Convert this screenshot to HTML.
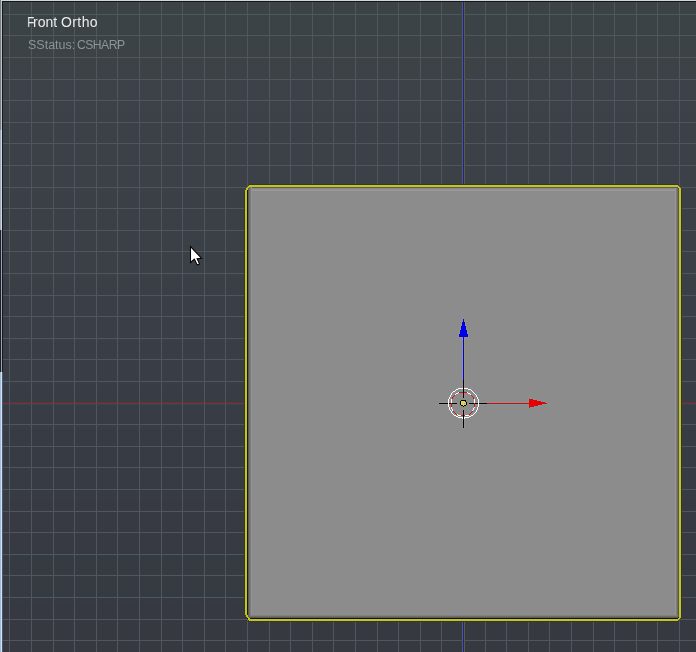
<!DOCTYPE html>
<html><head><meta charset="utf-8"><style>
html,body{margin:0;padding:0;width:696px;height:652px;overflow:hidden;background:#3a3e46}
.t{position:absolute;font-family:"Liberation Sans",sans-serif;white-space:nowrap;line-height:1;will-change:transform}
#t1{left:27px;top:15px;font-size:14px;color:#ececec;transform:scaleX(0.85);transform-origin:0 0}
#t1r{left:33px;top:15px;font-size:14px;color:#ececec;letter-spacing:0px}
#t1b{left:61px;top:15px;font-size:14px;color:#ececec;letter-spacing:0.4px}
#t2{left:28px;top:39px;font-size:12.5px;color:#8e9396;letter-spacing:0px}
#t2b{left:77px;top:39px;font-size:12.2px;color:#8e9396;letter-spacing:-0.55px}
</style></head><body>
<svg width="696" height="652" viewBox="0 0 696 652" shape-rendering="crispEdges" style="position:absolute;left:0;top:0"><rect x="0" y="0" width="696" height="38" fill="#3c4346"/><rect x="0" y="38" width="696" height="38" fill="#3c4246"/><rect x="0" y="76" width="696" height="37" fill="#3c4247"/><rect x="0" y="113" width="696" height="66" fill="#3c4147"/><rect x="0" y="179" width="696" height="14" fill="#3c4047"/><rect x="0" y="193" width="696" height="42" fill="#3b4047"/><rect x="0" y="235" width="696" height="1" fill="#3b4046"/><rect x="0" y="236" width="696" height="42" fill="#3b3f46"/><rect x="0" y="278" width="696" height="14" fill="#3a3f46"/><rect x="0" y="292" width="696" height="50" fill="#3a3e46"/><rect x="0" y="342" width="696" height="43" fill="#393d45"/><rect x="0" y="385" width="696" height="44" fill="#383c44"/><rect x="0" y="429" width="696" height="55" fill="#373b43"/><rect x="0" y="484" width="696" height="17" fill="#373b42"/><rect x="0" y="501" width="696" height="50" fill="#373a42"/><rect x="0" y="551" width="696" height="1" fill="#363a42"/><rect x="0" y="552" width="696" height="50" fill="#363a41"/><rect x="0" y="602" width="696" height="17" fill="#363941"/><rect x="0" y="619" width="696" height="33" fill="#363940"/><rect x="3" y="402" width="693" height="1" fill="#34444a"/><rect x="3" y="404" width="693" height="1" fill="#34444a"/><rect x="462" y="2" width="1" height="650" fill="#545c54"/><rect x="464" y="2" width="1" height="650" fill="#545c54"/><g fill="#50565e"><rect x="9" y="2" width="1" height="650"/><rect x="31" y="2" width="1" height="650"/><rect x="53" y="2" width="1" height="650"/><rect x="74" y="2" width="1" height="650"/><rect x="3" y="14" width="693" height="1"/><rect x="96" y="2" width="1" height="650"/><rect x="3" y="35" width="693" height="1"/><rect x="117" y="2" width="1" height="650"/><rect x="3" y="57" width="693" height="1"/><rect x="139" y="2" width="1" height="650"/><rect x="3" y="79" width="693" height="1"/><rect x="161" y="2" width="1" height="650"/><rect x="3" y="100" width="693" height="1"/><rect x="182" y="2" width="1" height="650"/><rect x="3" y="122" width="693" height="1"/><rect x="204" y="2" width="1" height="650"/><rect x="3" y="143" width="693" height="1"/><rect x="225" y="2" width="1" height="650"/><rect x="3" y="165" width="693" height="1"/><rect x="247" y="2" width="1" height="650"/><rect x="3" y="187" width="693" height="1"/><rect x="269" y="2" width="1" height="650"/><rect x="3" y="208" width="693" height="1"/><rect x="290" y="2" width="1" height="650"/><rect x="3" y="230" width="693" height="1"/><rect x="312" y="2" width="1" height="650"/><rect x="3" y="251" width="693" height="1"/><rect x="333" y="2" width="1" height="650"/><rect x="3" y="273" width="693" height="1"/><rect x="355" y="2" width="1" height="650"/><rect x="3" y="295" width="693" height="1"/><rect x="377" y="2" width="1" height="650"/><rect x="3" y="316" width="693" height="1"/><rect x="398" y="2" width="1" height="650"/><rect x="3" y="338" width="693" height="1"/><rect x="420" y="2" width="1" height="650"/><rect x="3" y="359" width="693" height="1"/><rect x="441" y="2" width="1" height="650"/><rect x="3" y="381" width="693" height="1"/><rect x="485" y="2" width="1" height="650"/><rect x="3" y="424" width="693" height="1"/><rect x="506" y="2" width="1" height="650"/><rect x="3" y="446" width="693" height="1"/><rect x="528" y="2" width="1" height="650"/><rect x="3" y="467" width="693" height="1"/><rect x="549" y="2" width="1" height="650"/><rect x="3" y="489" width="693" height="1"/><rect x="571" y="2" width="1" height="650"/><rect x="3" y="511" width="693" height="1"/><rect x="593" y="2" width="1" height="650"/><rect x="3" y="532" width="693" height="1"/><rect x="614" y="2" width="1" height="650"/><rect x="3" y="554" width="693" height="1"/><rect x="636" y="2" width="1" height="650"/><rect x="3" y="575" width="693" height="1"/><rect x="657" y="2" width="1" height="650"/><rect x="3" y="597" width="693" height="1"/><rect x="679" y="2" width="1" height="650"/><rect x="3" y="619" width="693" height="1"/><rect x="3" y="640" width="693" height="1"/></g><rect x="3" y="403" width="693" height="1" fill="#92282d"/><rect x="463" y="2" width="1" height="650" fill="#1f219c"/><rect x="247" y="187" width="432" height="432" fill="#8c8c8c"/><rect x="247" y="187" width="432" height="1" fill="#5a5a68"/><rect x="247" y="188" width="432" height="1" fill="#8a8a8a"/><rect x="247" y="189" width="432" height="1" fill="#939393"/><rect x="247" y="190" width="432" height="1" fill="#9a9a9a"/><rect x="247" y="187" width="1" height="432" fill="#16161e"/><rect x="248" y="187" width="1" height="432" fill="#5a5a5a"/><rect x="249" y="187" width="1" height="432" fill="#6e6e6e"/><rect x="250" y="187" width="1" height="432" fill="#7e7e7e"/><rect x="251" y="187" width="1" height="432" fill="#929292"/><rect x="675" y="188" width="1" height="431" fill="#969696"/><rect x="676" y="188" width="1" height="431" fill="#7e7e7e"/><rect x="677" y="188" width="1" height="431" fill="#6a6a6a"/><rect x="678" y="188" width="1" height="431" fill="#545462"/><rect x="251" y="615" width="427" height="1" fill="#808080"/><rect x="250" y="616" width="428" height="1" fill="#6e6e6e"/><rect x="249" y="617" width="429" height="1" fill="#5a5a5a"/><rect x="248" y="618" width="430" height="1" fill="#101018"/><rect x="678" y="617" width="1" height="2" fill="#202028"/><rect x="249" y="184" width="429" height="1" fill="#30364a"/><rect x="249" y="621" width="429" height="1" fill="#30364a"/><rect x="244" y="191" width="1" height="423" fill="#30364a"/><rect x="681" y="189" width="1" height="428" fill="#30364a"/><g fill="#c9c508"><rect x="249" y="185" width="429" height="2"/><rect x="249" y="619" width="429" height="2"/><rect x="245" y="190" width="2" height="425"/><rect x="679" y="188" width="2" height="430"/><rect x="248" y="186" width="2" height="1"/><rect x="247" y="187" width="2" height="1"/><rect x="246" y="188" width="2" height="1"/><rect x="246" y="189" width="2" height="1"/><rect x="246" y="615" width="2" height="1"/><rect x="246" y="616" width="2" height="1"/><rect x="247" y="617" width="2" height="1"/><rect x="248" y="618" width="2" height="1"/><rect x="248" y="619" width="2" height="1"/><rect x="677" y="186" width="2" height="1"/><rect x="678" y="187" width="2" height="1"/><rect x="678" y="618" width="2" height="1"/><rect x="677" y="619" width="2" height="1"/></g><g fill="#949482"><rect x="463" y="318" width="1" height="1"/><rect x="462" y="319" width="1" height="1"/><rect x="464" y="319" width="1" height="1"/><rect x="462" y="320" width="1" height="1"/><rect x="464" y="320" width="1" height="1"/><rect x="462" y="321" width="1" height="1"/><rect x="464" y="321" width="1" height="1"/><rect x="461" y="322" width="1" height="1"/><rect x="465" y="322" width="1" height="1"/><rect x="461" y="323" width="1" height="1"/><rect x="465" y="323" width="1" height="1"/><rect x="461" y="324" width="1" height="1"/><rect x="465" y="324" width="1" height="1"/><rect x="461" y="325" width="1" height="1"/><rect x="465" y="325" width="1" height="1"/><rect x="460" y="326" width="1" height="1"/><rect x="466" y="326" width="1" height="1"/><rect x="460" y="327" width="1" height="1"/><rect x="466" y="327" width="1" height="1"/><rect x="460" y="328" width="1" height="1"/><rect x="466" y="328" width="1" height="1"/><rect x="460" y="329" width="1" height="1"/><rect x="466" y="329" width="1" height="1"/><rect x="459" y="330" width="1" height="1"/><rect x="467" y="330" width="1" height="1"/><rect x="459" y="331" width="1" height="1"/><rect x="467" y="331" width="1" height="1"/><rect x="459" y="332" width="1" height="1"/><rect x="467" y="332" width="1" height="1"/><rect x="459" y="333" width="1" height="1"/><rect x="467" y="333" width="1" height="1"/><rect x="458" y="334" width="1" height="1"/><rect x="468" y="334" width="1" height="1"/><rect x="458" y="335" width="1" height="1"/><rect x="468" y="335" width="1" height="1"/><rect x="458" y="336" width="1" height="1"/><rect x="468" y="336" width="1" height="1"/><rect x="459" y="337" width="4" height="1"/><rect x="464" y="337" width="4" height="1"/><rect x="462" y="338" width="1" height="1"/><rect x="464" y="338" width="1" height="1"/><rect x="462" y="339" width="1" height="1"/><rect x="464" y="339" width="1" height="1"/><rect x="462" y="340" width="1" height="1"/><rect x="464" y="340" width="1" height="1"/><rect x="462" y="341" width="1" height="1"/><rect x="464" y="341" width="1" height="1"/><rect x="462" y="342" width="1" height="1"/><rect x="464" y="342" width="1" height="1"/><rect x="462" y="343" width="1" height="1"/><rect x="464" y="343" width="1" height="1"/><rect x="462" y="344" width="1" height="1"/><rect x="464" y="344" width="1" height="1"/><rect x="462" y="345" width="1" height="1"/><rect x="464" y="345" width="1" height="1"/><rect x="462" y="346" width="1" height="1"/><rect x="464" y="346" width="1" height="1"/><rect x="462" y="347" width="1" height="1"/><rect x="464" y="347" width="1" height="1"/><rect x="462" y="348" width="1" height="1"/><rect x="464" y="348" width="1" height="1"/><rect x="462" y="349" width="1" height="1"/><rect x="464" y="349" width="1" height="1"/><rect x="462" y="350" width="1" height="1"/><rect x="464" y="350" width="1" height="1"/><rect x="462" y="351" width="1" height="1"/><rect x="464" y="351" width="1" height="1"/><rect x="462" y="352" width="1" height="1"/><rect x="464" y="352" width="1" height="1"/><rect x="462" y="353" width="1" height="1"/><rect x="464" y="353" width="1" height="1"/><rect x="462" y="354" width="1" height="1"/><rect x="464" y="354" width="1" height="1"/><rect x="462" y="355" width="1" height="1"/><rect x="464" y="355" width="1" height="1"/><rect x="462" y="356" width="1" height="1"/><rect x="464" y="356" width="1" height="1"/><rect x="462" y="357" width="1" height="1"/><rect x="464" y="357" width="1" height="1"/><rect x="462" y="358" width="1" height="1"/><rect x="464" y="358" width="1" height="1"/><rect x="462" y="359" width="1" height="1"/><rect x="464" y="359" width="1" height="1"/><rect x="462" y="360" width="1" height="1"/><rect x="464" y="360" width="1" height="1"/><rect x="462" y="361" width="1" height="1"/><rect x="464" y="361" width="1" height="1"/><rect x="462" y="362" width="1" height="1"/><rect x="464" y="362" width="1" height="1"/><rect x="462" y="363" width="1" height="1"/><rect x="464" y="363" width="1" height="1"/><rect x="462" y="364" width="1" height="1"/><rect x="464" y="364" width="1" height="1"/><rect x="462" y="365" width="1" height="1"/><rect x="464" y="365" width="1" height="1"/><rect x="462" y="366" width="1" height="1"/><rect x="464" y="366" width="1" height="1"/><rect x="462" y="367" width="1" height="1"/><rect x="464" y="367" width="1" height="1"/><rect x="462" y="368" width="1" height="1"/><rect x="464" y="368" width="1" height="1"/><rect x="462" y="369" width="1" height="1"/><rect x="464" y="369" width="1" height="1"/><rect x="462" y="370" width="1" height="1"/><rect x="464" y="370" width="1" height="1"/><rect x="462" y="371" width="1" height="1"/><rect x="464" y="371" width="1" height="1"/><rect x="462" y="372" width="1" height="1"/><rect x="464" y="372" width="1" height="1"/><rect x="462" y="373" width="1" height="1"/><rect x="464" y="373" width="1" height="1"/><rect x="462" y="374" width="1" height="1"/><rect x="464" y="374" width="1" height="1"/><rect x="462" y="375" width="1" height="1"/><rect x="464" y="375" width="1" height="1"/><rect x="462" y="376" width="1" height="1"/><rect x="464" y="376" width="1" height="1"/><rect x="462" y="377" width="1" height="1"/><rect x="464" y="377" width="1" height="1"/><rect x="462" y="378" width="1" height="1"/><rect x="464" y="378" width="1" height="1"/><rect x="462" y="379" width="1" height="1"/><rect x="464" y="379" width="1" height="1"/></g><g fill="#0000e6"><rect x="463" y="319" width="1" height="1"/><rect x="463" y="320" width="1" height="1"/><rect x="463" y="321" width="1" height="1"/><rect x="462" y="322" width="3" height="1"/><rect x="462" y="323" width="3" height="1"/><rect x="462" y="324" width="3" height="1"/><rect x="462" y="325" width="3" height="1"/><rect x="461" y="326" width="5" height="1"/><rect x="461" y="327" width="5" height="1"/><rect x="461" y="328" width="5" height="1"/><rect x="461" y="329" width="5" height="1"/><rect x="460" y="330" width="7" height="1"/><rect x="460" y="331" width="7" height="1"/><rect x="460" y="332" width="7" height="1"/><rect x="460" y="333" width="7" height="1"/><rect x="459" y="334" width="9" height="1"/><rect x="459" y="335" width="9" height="1"/><rect x="459" y="336" width="9" height="1"/><rect x="463" y="337" width="1" height="1"/><rect x="463" y="338" width="1" height="1"/><rect x="463" y="339" width="1" height="1"/><rect x="463" y="340" width="1" height="1"/><rect x="463" y="341" width="1" height="1"/><rect x="463" y="342" width="1" height="1"/><rect x="463" y="343" width="1" height="1"/><rect x="463" y="344" width="1" height="1"/><rect x="463" y="345" width="1" height="1"/><rect x="463" y="346" width="1" height="1"/><rect x="463" y="347" width="1" height="1"/><rect x="463" y="348" width="1" height="1"/><rect x="463" y="349" width="1" height="1"/><rect x="463" y="350" width="1" height="1"/><rect x="463" y="351" width="1" height="1"/><rect x="463" y="352" width="1" height="1"/><rect x="463" y="353" width="1" height="1"/><rect x="463" y="354" width="1" height="1"/><rect x="463" y="355" width="1" height="1"/><rect x="463" y="356" width="1" height="1"/><rect x="463" y="357" width="1" height="1"/><rect x="463" y="358" width="1" height="1"/><rect x="463" y="359" width="1" height="1"/><rect x="463" y="360" width="1" height="1"/><rect x="463" y="361" width="1" height="1"/><rect x="463" y="362" width="1" height="1"/><rect x="463" y="363" width="1" height="1"/><rect x="463" y="364" width="1" height="1"/><rect x="463" y="365" width="1" height="1"/><rect x="463" y="366" width="1" height="1"/><rect x="463" y="367" width="1" height="1"/><rect x="463" y="368" width="1" height="1"/><rect x="463" y="369" width="1" height="1"/><rect x="463" y="370" width="1" height="1"/><rect x="463" y="371" width="1" height="1"/><rect x="463" y="372" width="1" height="1"/><rect x="463" y="373" width="1" height="1"/><rect x="463" y="374" width="1" height="1"/><rect x="463" y="375" width="1" height="1"/><rect x="463" y="376" width="1" height="1"/><rect x="463" y="377" width="1" height="1"/><rect x="463" y="378" width="1" height="1"/><rect x="463" y="379" width="1" height="1"/></g><g fill="#7c9898"><rect x="529" y="398" width="4" height="1"/><rect x="528" y="399" width="1" height="1"/><rect x="533" y="399" width="4" height="1"/><rect x="528" y="400" width="1" height="1"/><rect x="537" y="400" width="4" height="1"/><rect x="528" y="401" width="1" height="1"/><rect x="541" y="401" width="4" height="1"/><rect x="487" y="402" width="42" height="1"/><rect x="545" y="402" width="2" height="1"/><rect x="486" y="403" width="1" height="1"/><rect x="547" y="403" width="1" height="1"/><rect x="487" y="404" width="42" height="1"/><rect x="542" y="404" width="5" height="1"/><rect x="528" y="405" width="1" height="1"/><rect x="538" y="405" width="4" height="1"/><rect x="528" y="406" width="1" height="1"/><rect x="534" y="406" width="4" height="1"/><rect x="528" y="407" width="1" height="1"/><rect x="530" y="407" width="4" height="1"/><rect x="529" y="408" width="1" height="1"/></g><g fill="#e60000"><rect x="529" y="399" width="4" height="1"/><rect x="529" y="400" width="8" height="1"/><rect x="529" y="401" width="12" height="1"/><rect x="529" y="402" width="16" height="1"/><rect x="487" y="403" width="60" height="1"/><rect x="529" y="404" width="13" height="1"/><rect x="529" y="405" width="9" height="1"/><rect x="529" y="406" width="5" height="1"/><rect x="529" y="407" width="1" height="1"/></g><g fill="#939393"><rect x="462" y="380" width="1" height="1"/><rect x="464" y="380" width="1" height="1"/><rect x="462" y="381" width="1" height="1"/><rect x="464" y="381" width="1" height="1"/><rect x="462" y="382" width="1" height="1"/><rect x="464" y="382" width="1" height="1"/><rect x="462" y="383" width="1" height="1"/><rect x="464" y="383" width="1" height="1"/><rect x="462" y="384" width="1" height="1"/><rect x="464" y="384" width="1" height="1"/><rect x="462" y="385" width="1" height="1"/><rect x="464" y="385" width="1" height="1"/><rect x="462" y="386" width="1" height="1"/><rect x="464" y="386" width="1" height="1"/><rect x="462" y="387" width="1" height="1"/><rect x="464" y="387" width="1" height="1"/><rect x="462" y="388" width="1" height="1"/><rect x="464" y="388" width="1" height="1"/><rect x="462" y="389" width="1" height="1"/><rect x="464" y="389" width="1" height="1"/><rect x="462" y="390" width="1" height="1"/><rect x="464" y="390" width="1" height="1"/><rect x="462" y="391" width="1" height="1"/><rect x="464" y="391" width="1" height="1"/><rect x="462" y="392" width="1" height="1"/><rect x="464" y="392" width="1" height="1"/><rect x="462" y="393" width="1" height="1"/><rect x="464" y="393" width="1" height="1"/><rect x="462" y="394" width="1" height="1"/><rect x="464" y="394" width="1" height="1"/><rect x="462" y="395" width="1" height="1"/><rect x="464" y="395" width="1" height="1"/><rect x="462" y="396" width="1" height="1"/><rect x="464" y="396" width="1" height="1"/><rect x="462" y="397" width="1" height="1"/><rect x="464" y="397" width="1" height="1"/><rect x="463" y="398" width="1" height="1"/><rect x="439" y="402" width="18" height="1"/><rect x="469" y="402" width="18" height="1"/><rect x="438" y="403" width="1" height="1"/><rect x="457" y="403" width="1" height="1"/><rect x="468" y="403" width="1" height="1"/><rect x="439" y="404" width="18" height="1"/><rect x="469" y="404" width="18" height="1"/><rect x="463" y="409" width="1" height="1"/><rect x="462" y="410" width="1" height="1"/><rect x="464" y="410" width="1" height="1"/><rect x="462" y="411" width="1" height="1"/><rect x="464" y="411" width="1" height="1"/><rect x="462" y="412" width="1" height="1"/><rect x="464" y="412" width="1" height="1"/><rect x="462" y="413" width="1" height="1"/><rect x="464" y="413" width="1" height="1"/><rect x="462" y="414" width="1" height="1"/><rect x="464" y="414" width="1" height="1"/><rect x="462" y="415" width="1" height="1"/><rect x="464" y="415" width="1" height="1"/><rect x="462" y="416" width="1" height="1"/><rect x="464" y="416" width="1" height="1"/><rect x="462" y="417" width="1" height="1"/><rect x="464" y="417" width="1" height="1"/><rect x="462" y="418" width="1" height="1"/><rect x="464" y="418" width="1" height="1"/><rect x="462" y="419" width="1" height="1"/><rect x="464" y="419" width="1" height="1"/><rect x="462" y="420" width="1" height="1"/><rect x="464" y="420" width="1" height="1"/><rect x="462" y="421" width="1" height="1"/><rect x="464" y="421" width="1" height="1"/><rect x="462" y="422" width="1" height="1"/><rect x="464" y="422" width="1" height="1"/><rect x="462" y="423" width="1" height="1"/><rect x="464" y="423" width="1" height="1"/><rect x="462" y="424" width="1" height="1"/><rect x="464" y="424" width="1" height="1"/><rect x="462" y="425" width="1" height="1"/><rect x="464" y="425" width="1" height="1"/><rect x="462" y="426" width="1" height="1"/><rect x="464" y="426" width="1" height="1"/><rect x="462" y="427" width="1" height="1"/><rect x="464" y="427" width="1" height="1"/><rect x="463" y="428" width="1" height="1"/></g><g fill="#000"><rect x="463" y="380" width="1" height="1"/><rect x="463" y="381" width="1" height="1"/><rect x="463" y="382" width="1" height="1"/><rect x="463" y="383" width="1" height="1"/><rect x="463" y="384" width="1" height="1"/><rect x="463" y="385" width="1" height="1"/><rect x="463" y="386" width="1" height="1"/><rect x="463" y="387" width="1" height="1"/><rect x="463" y="388" width="1" height="1"/><rect x="463" y="389" width="1" height="1"/><rect x="463" y="390" width="1" height="1"/><rect x="463" y="391" width="1" height="1"/><rect x="463" y="392" width="1" height="1"/><rect x="463" y="393" width="1" height="1"/><rect x="463" y="394" width="1" height="1"/><rect x="463" y="395" width="1" height="1"/><rect x="463" y="396" width="1" height="1"/><rect x="463" y="397" width="1" height="1"/><rect x="439" y="403" width="18" height="1"/><rect x="469" y="403" width="18" height="1"/><rect x="463" y="410" width="1" height="1"/><rect x="463" y="411" width="1" height="1"/><rect x="463" y="412" width="1" height="1"/><rect x="463" y="413" width="1" height="1"/><rect x="463" y="414" width="1" height="1"/><rect x="463" y="415" width="1" height="1"/><rect x="463" y="416" width="1" height="1"/><rect x="463" y="417" width="1" height="1"/><rect x="463" y="418" width="1" height="1"/><rect x="463" y="419" width="1" height="1"/><rect x="463" y="420" width="1" height="1"/><rect x="463" y="421" width="1" height="1"/><rect x="463" y="422" width="1" height="1"/><rect x="463" y="423" width="1" height="1"/><rect x="463" y="424" width="1" height="1"/><rect x="463" y="425" width="1" height="1"/><rect x="463" y="426" width="1" height="1"/><rect x="463" y="427" width="1" height="1"/></g><g fill="#ffffff"><rect x="458" y="388" width="5" height="1"/><rect x="464" y="388" width="4" height="1"/><rect x="456" y="389" width="2" height="1"/><rect x="468" y="389" width="3" height="1"/><rect x="455" y="390" width="1" height="1"/><rect x="471" y="390" width="1" height="1"/><rect x="453" y="391" width="2" height="1"/><rect x="472" y="391" width="1" height="1"/><rect x="452" y="392" width="1" height="1"/><rect x="473" y="392" width="1" height="1"/><rect x="451" y="393" width="1" height="1"/><rect x="474" y="393" width="1" height="1"/><rect x="451" y="394" width="1" height="1"/><rect x="475" y="394" width="1" height="1"/><rect x="450" y="395" width="1" height="1"/><rect x="476" y="395" width="1" height="1"/><rect x="450" y="396" width="1" height="1"/><rect x="476" y="396" width="1" height="1"/><rect x="449" y="397" width="1" height="1"/><rect x="477" y="397" width="1" height="1"/><rect x="449" y="398" width="1" height="1"/><rect x="477" y="398" width="1" height="1"/><rect x="448" y="399" width="1" height="1"/><rect x="478" y="399" width="1" height="1"/><rect x="448" y="400" width="1" height="1"/><rect x="478" y="400" width="1" height="1"/><rect x="448" y="401" width="1" height="1"/><rect x="478" y="401" width="1" height="1"/><rect x="448" y="402" width="1" height="1"/><rect x="478" y="402" width="1" height="1"/><rect x="448" y="403" width="1" height="1"/><rect x="478" y="403" width="1" height="1"/><rect x="448" y="404" width="1" height="1"/><rect x="478" y="404" width="1" height="1"/><rect x="448" y="405" width="1" height="1"/><rect x="478" y="405" width="1" height="1"/><rect x="448" y="406" width="1" height="1"/><rect x="478" y="406" width="1" height="1"/><rect x="449" y="407" width="1" height="1"/><rect x="477" y="407" width="1" height="1"/><rect x="449" y="408" width="1" height="1"/><rect x="477" y="408" width="1" height="1"/><rect x="449" y="409" width="1" height="1"/><rect x="477" y="409" width="1" height="1"/><rect x="450" y="410" width="1" height="1"/><rect x="476" y="410" width="1" height="1"/><rect x="451" y="411" width="1" height="1"/><rect x="476" y="411" width="1" height="1"/><rect x="451" y="412" width="1" height="1"/><rect x="475" y="412" width="1" height="1"/><rect x="452" y="413" width="1" height="1"/><rect x="474" y="413" width="1" height="1"/><rect x="453" y="414" width="1" height="1"/><rect x="473" y="414" width="1" height="1"/><rect x="454" y="415" width="2" height="1"/><rect x="471" y="415" width="2" height="1"/><rect x="456" y="416" width="2" height="1"/><rect x="469" y="416" width="2" height="1"/><rect x="458" y="417" width="5" height="1"/><rect x="464" y="417" width="5" height="1"/><rect x="462" y="418" width="1" height="1"/><rect x="464" y="418" width="1" height="1"/></g><g fill="#7a9494"><rect x="459" y="391" width="4" height="1"/><rect x="464" y="391" width="3" height="1"/><rect x="459" y="393" width="4" height="1"/><rect x="464" y="393" width="3" height="1"/><rect x="454" y="394" width="1" height="1"/><rect x="471" y="394" width="1" height="1"/><rect x="453" y="395" width="1" height="1"/><rect x="455" y="395" width="1" height="1"/><rect x="470" y="395" width="1" height="1"/><rect x="472" y="395" width="1" height="1"/><rect x="452" y="396" width="1" height="1"/><rect x="454" y="396" width="1" height="1"/><rect x="471" y="396" width="1" height="1"/><rect x="473" y="396" width="1" height="1"/><rect x="451" y="397" width="1" height="1"/><rect x="453" y="397" width="1" height="1"/><rect x="472" y="397" width="1" height="1"/><rect x="474" y="397" width="1" height="1"/><rect x="451" y="398" width="1" height="1"/><rect x="453" y="398" width="1" height="1"/><rect x="472" y="398" width="1" height="1"/><rect x="474" y="398" width="1" height="1"/><rect x="452" y="399" width="1" height="1"/><rect x="473" y="399" width="1" height="1"/><rect x="450" y="404" width="1" height="1"/><rect x="452" y="404" width="1" height="1"/><rect x="473" y="404" width="1" height="1"/><rect x="475" y="404" width="1" height="1"/><rect x="450" y="405" width="1" height="1"/><rect x="452" y="405" width="1" height="1"/><rect x="473" y="405" width="1" height="1"/><rect x="475" y="405" width="1" height="1"/><rect x="450" y="406" width="1" height="1"/><rect x="452" y="406" width="1" height="1"/><rect x="473" y="406" width="1" height="1"/><rect x="475" y="406" width="1" height="1"/><rect x="453" y="410" width="1" height="1"/><rect x="452" y="411" width="1" height="1"/><rect x="454" y="411" width="1" height="1"/><rect x="471" y="411" width="1" height="1"/><rect x="473" y="411" width="1" height="1"/><rect x="453" y="412" width="1" height="1"/><rect x="455" y="412" width="1" height="1"/><rect x="470" y="412" width="1" height="1"/><rect x="472" y="412" width="1" height="1"/><rect x="454" y="413" width="1" height="1"/><rect x="456" y="413" width="1" height="1"/><rect x="469" y="413" width="1" height="1"/><rect x="471" y="413" width="1" height="1"/><rect x="455" y="414" width="1" height="1"/><rect x="461" y="414" width="2" height="1"/><rect x="464" y="414" width="1" height="1"/><rect x="468" y="414" width="1" height="1"/><rect x="470" y="414" width="1" height="1"/><rect x="456" y="415" width="1" height="1"/><rect x="469" y="415" width="1" height="1"/><rect x="461" y="416" width="2" height="1"/><rect x="464" y="416" width="1" height="1"/></g><g fill="#ff0000"><rect x="459" y="392" width="4" height="1"/><rect x="464" y="392" width="3" height="1"/><rect x="454" y="395" width="1" height="1"/><rect x="471" y="395" width="1" height="1"/><rect x="453" y="396" width="1" height="1"/><rect x="472" y="396" width="1" height="1"/><rect x="452" y="397" width="1" height="1"/><rect x="473" y="397" width="1" height="1"/><rect x="452" y="398" width="1" height="1"/><rect x="473" y="398" width="1" height="1"/><rect x="451" y="403" width="1" height="1"/><rect x="474" y="403" width="1" height="1"/><rect x="451" y="404" width="1" height="1"/><rect x="474" y="404" width="1" height="1"/><rect x="451" y="405" width="1" height="1"/><rect x="474" y="405" width="1" height="1"/><rect x="451" y="406" width="1" height="1"/><rect x="474" y="406" width="1" height="1"/><rect x="453" y="411" width="1" height="1"/><rect x="472" y="411" width="1" height="1"/><rect x="454" y="412" width="1" height="1"/><rect x="471" y="412" width="1" height="1"/><rect x="455" y="413" width="1" height="1"/><rect x="470" y="413" width="1" height="1"/><rect x="456" y="414" width="1" height="1"/><rect x="469" y="414" width="1" height="1"/><rect x="461" y="415" width="2" height="1"/><rect x="464" y="415" width="1" height="1"/></g><g fill="#ffffff"><rect x="458" y="392" width="1" height="1"/><rect x="467" y="392" width="1" height="1"/><rect x="456" y="393" width="2" height="1"/><rect x="468" y="393" width="2" height="1"/><rect x="455" y="394" width="1" height="1"/><rect x="470" y="394" width="1" height="1"/><rect x="451" y="399" width="1" height="1"/><rect x="474" y="399" width="1" height="1"/><rect x="451" y="400" width="1" height="1"/><rect x="474" y="400" width="1" height="1"/><rect x="451" y="401" width="1" height="1"/><rect x="474" y="401" width="1" height="1"/><rect x="451" y="402" width="1" height="1"/><rect x="474" y="402" width="1" height="1"/><rect x="451" y="407" width="1" height="1"/><rect x="474" y="407" width="1" height="1"/><rect x="451" y="408" width="1" height="1"/><rect x="473" y="408" width="1" height="1"/><rect x="452" y="409" width="1" height="1"/><rect x="473" y="409" width="1" height="1"/><rect x="452" y="410" width="1" height="1"/><rect x="472" y="410" width="1" height="1"/><rect x="457" y="414" width="1" height="1"/><rect x="458" y="415" width="3" height="1"/><rect x="465" y="415" width="4" height="1"/></g><g fill="#000"><rect x="461" y="400" width="5" height="1"/><rect x="460" y="401" width="1" height="1"/><rect x="465" y="401" width="1" height="1"/><rect x="460" y="402" width="1" height="1"/><rect x="466" y="402" width="1" height="1"/><rect x="460" y="403" width="1" height="1"/><rect x="466" y="403" width="1" height="1"/><rect x="460" y="404" width="1" height="1"/><rect x="466" y="404" width="1" height="1"/><rect x="461" y="405" width="2" height="1"/><rect x="464" y="405" width="2" height="1"/><rect x="463" y="406" width="1" height="1"/></g><g fill="#e0d850"><rect x="461" y="401" width="4" height="1"/><rect x="461" y="402" width="5" height="1"/><rect x="461" y="403" width="5" height="1"/><rect x="461" y="404" width="5" height="1"/><rect x="463" y="405" width="1" height="1"/></g><rect x="464" y="403" width="1" height="1" fill="#b8a830"/><path d="M190.5,246.6 L190.5,262.5 L194.4,259.0 L197.2,264.9 L199.5,263.9 L197.1,258.7 L201.6,258.3 Z" fill="#fff" stroke="#000" stroke-width="1.05" stroke-linejoin="miter" shape-rendering="auto"/><rect x="0" y="0" width="696" height="1" fill="#d2d6d8"/><rect x="2" y="1" width="694" height="1" fill="#14161a"/><rect x="0" y="0" width="1" height="130" fill="#7c8084"/><rect x="1" y="1" width="1" height="129" fill="#bcc0c4"/><rect x="0" y="130" width="1" height="100" fill="#9ca8b8"/><rect x="1" y="130" width="1" height="100" fill="#d0dae4"/><rect x="0" y="230" width="1" height="142" fill="#1a2030"/><rect x="1" y="230" width="1" height="142" fill="#a0a4a8"/><rect x="0" y="372" width="1" height="280" fill="#a0bcd8"/><rect x="1" y="372" width="1" height="280" fill="#d0e2f4"/><rect x="2" y="1" width="1" height="371" fill="#161a22"/><rect x="2" y="372" width="1" height="280" fill="#4a5868"/></svg>
<div class="t" id="t1">F</div><div class="t" id="t1r">ront</div><div class="t" id="t1b">Ortho</div>
<div class="t" id="t2">SStatus:</div><div class="t" id="t2b">CSHARP</div>
</body></html>
